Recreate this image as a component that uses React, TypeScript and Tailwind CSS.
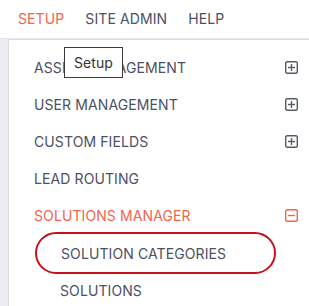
import React from 'react';

const PlusBox: React.FC<{ minus?: boolean; color: string }> = ({ minus, color }) => (
  <svg width="13" height="13" viewBox="0 0 13 13" fill="none" stroke={color} strokeWidth="1.4">
    <rect x="0.7" y="0.7" width="11.6" height="11.6" rx="1.5" />
    <line x1="3" y1="6.5" x2="10" y2="6.5" />
    {!minus && <line x1="6.5" y1="3" x2="6.5" y2="10" />}
  </svg>
);

const Item: React.FC<{ label: string; icon?: 'plus' | 'minus'; active?: boolean }> = ({ label, icon, active }) => (
  <div className="h-[37px] flex items-center justify-between pl-[25px] pr-[11px]">
    <span className={active ? 'text-[#f0654c]' : 'text-[#4b5063]'}>{label}</span>
    {icon && <PlusBox minus={icon === 'minus'} color={active ? '#f0654c' : '#555a66'} />}
  </div>
);

export default function App() {
  return (
    <div
      className="w-[309px] h-[306px] overflow-hidden bg-white text-[14px] tracking-[0.1px]"
      style={{ fontFamily: 'Inter, "Noto Sans", sans-serif' }}
    >
      <header className="h-[39px] flex items-center gap-[21px] pl-[18px] pb-[1px] border-b border-[#e6e7ea]">
        <span className="text-[#f0654c]">SETUP</span>
        <span className="text-[#4b5063]">SITE ADMIN</span>
        <span className="text-[#4b5063]">HELP</span>
      </header>
      <div className="flex h-full">
        <div className="w-[8px] bg-[#ecedf0]" />
        <div className="relative flex-1 bg-white border-l border-t border-[#dcdde1] pt-[9px]">
          <Item label="ASSET MANAGEMENT" icon="plus" />
          <Item label="USER MANAGEMENT" icon="plus" />
          <Item label="CUSTOM FIELDS" icon="plus" />
          <Item label="LEAD ROUTING" />
          <Item label="SOLUTIONS MANAGER" icon="minus" active />
          <div className="ml-[26px] mt-[-2px] w-[241px] h-[42px] rounded-full border-2 border-[#c8101a] flex items-center pl-[24px] text-[#4b5063]">
            SOLUTION CATEGORIES
          </div>
          <div className="h-[32px] flex items-center pl-[51px] text-[#4b5063]">SOLUTIONS</div>
          <div className="absolute left-[55px] top-[7px] w-[59px] h-[31px] bg-white border border-[#3a3a3a] flex items-center justify-center text-[14px] text-[#333]">
            Setup
          </div>
        </div>
      </div>
    </div>
  );
}
